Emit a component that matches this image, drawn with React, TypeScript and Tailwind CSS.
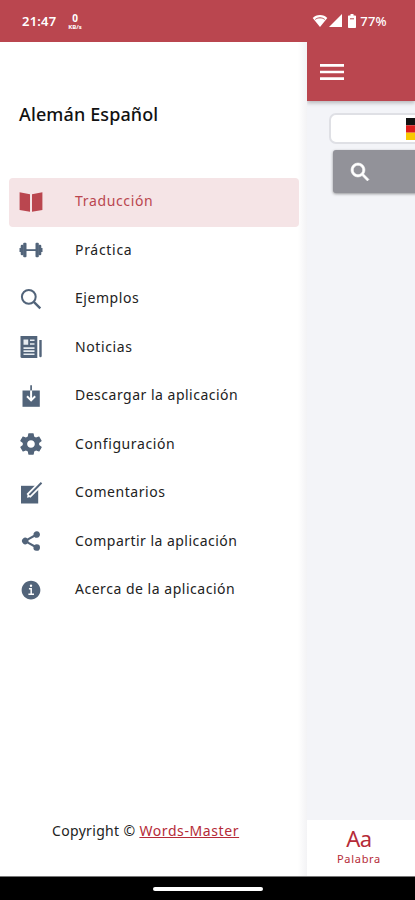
import type { SVGProps } from 'react';
import { IoMdSettings } from 'react-icons/io';
import { IoInformationCircleSharp, IoMenuSharp, IoSearchSharp, IoShareSocialSharp } from 'react-icons/io5';

function BookIcon(props: SVGProps<SVGSVGElement>) {
    return (
        <svg viewBox="0 0 24 24" fill="currentColor" {...props}>
            <path d="M.6 2.300L11 4.200v17.600L.6 20zM23.400 2.300L13 4.200v17.600L23.400 20z" />
        </svg>
    );
}

function BarbellIcon(props: SVGProps<SVGSVGElement>) {
    return (
        <svg viewBox="0 0 24 24" fill="currentColor" {...props}>
            <rect x="7" y="11.200" width="10" height="1.800" />
            <rect x="4.200" y="4.700" width="3.300" height="14.600" rx="1" />
            <rect x="16.500" y="4.700" width="3.300" height="14.600" rx="1" />
            <rect x="1.700" y="6.800" width="3" height="10.400" rx="1.200" />
            <rect x="19.300" y="6.800" width="3" height="10.400" rx="1.200" />
            <path d="M.5 10h2v4h-2zM21.500 10h2v4h-2z" />
        </svg>
    );
}

function NewsIcon(props: SVGProps<SVGSVGElement>) {
    return (
        <svg viewBox="0 0 24 24" fill="currentColor" {...props}>
            <path d="M1.500 1h16.800v22H3q-1.500 0-1.500-1.500z" />
            <path d="M20.300 5h2.400v16q0 1.300-1.200 1.300t-1.200-1.300z" />
            <path d="M4.500 4.500h4.700v5.200H4.500zM11 4.500h4.500v1.500H11zM11 8.200h4.500v1.500H11zM4.500 12.300h11v1.800h-11zM4.500 15.300h11v1.800h-11zM4.500 18.500h11V20h-11z" fill="#e6ebf0" />
        </svg>
    );
}

function DownloadIcon(props: SVGProps<SVGSVGElement>) {
    return (
        <svg viewBox="0 0 24 24" fill="none" {...props}>
            <path d="M3.500 6.500h17.300v16.300H3.500z" fill="currentColor" />
            <path d="M12.100 1.200v5.500" stroke="currentColor" strokeWidth="1.700" />
            <path d="M12.100 6.500v9.500M8 12.300l4.100 4.100 4.100-4.100" stroke="#fff" strokeWidth="2" />
        </svg>
    );
}

function CreateIcon(props: SVGProps<SVGSVGElement>) {
    return (
        <svg viewBox="0 0 24 24" fill="none" {...props}>
            <path d="M2 4.800h17.200v17.700H2z" fill="currentColor" />
            <path d="M22.500 1.800L9.500 14.900" stroke="#fff" strokeWidth="5.500" />
            <path d="M22.500 1.800l-12.200 12.300" stroke="currentColor" strokeWidth="2" />
            <path d="M8 16.800l.8-3.500 2.700 2.700z" fill="#fff" />
        </svg>
    );
}

function SearchIcon(props: SVGProps<SVGSVGElement>) {
    return (
        <svg viewBox="0 0 24 24" fill="none" stroke="currentColor" {...props}>
            <circle cx="9.800" cy="9.800" r="6.900" strokeWidth="2" />
            <path d="M14.800 14.800l6.500 6.500" strokeWidth="2.400" />
        </svg>
    );
}

const MENU_ITEMS = [
    { title: 'Traducción', icon: BookIcon, tracking: 'tracking-[0.65px]', active: true },
    { title: 'Práctica', icon: BarbellIcon, tracking: 'tracking-[0.7px]' },
    { title: 'Ejemplos', icon: SearchIcon, tracking: 'tracking-[0.55px]' },
    { title: 'Noticias', icon: NewsIcon, tracking: 'tracking-[0.6px]' },
    { title: 'Descargar la aplicación', icon: DownloadIcon, tracking: 'tracking-[0.5px]' },
    { title: 'Configuración', icon: IoMdSettings, tracking: 'tracking-[0.6px]', iconClass: 'scale-110' },
    { title: 'Comentarios', icon: CreateIcon, tracking: 'tracking-[0.55px]' },
    { title: 'Compartir la aplicación', icon: IoShareSocialSharp, tracking: 'tracking-[0.47px]' },
    { title: 'Acerca de la aplicación', icon: IoInformationCircleSharp, tracking: 'tracking-[0.52px]' },
];

function StatusBar() {
    return (
        <div className="flex h-[42px] shrink-0 items-center justify-between bg-[#ba464f] pl-[22px] pr-[28px] text-white">
            <div className="flex items-center gap-[12px]">
                <span className="text-[13px] font-semibold leading-none tracking-[0.2px]">21:47</span>
                <span className="flex flex-col items-center pt-[1px] font-bold">
                    <span className="text-[10px] leading-[10px]">0</span>
                    <span className="text-[6px] leading-[8px]">KB/s</span>
                </span>
            </div>
            <div className="flex items-center">
                <svg className="h-[14px] w-[16px]" viewBox="0 0 16 14">
                    <path d="M8 1C5 1 2.400 2.100.7 3.900L8 13l7.300-9.100C13.600 2.100 11 1 8 1z" fill="#fff" />
                    <path d="M3.300 5.400C5.800 3.300 10.200 3.300 12.700 5.400" fill="none" stroke="#ba464f" strokeWidth="1" />
                </svg>
                <svg className="ml-px h-[14px] w-[13px]" viewBox="0 0 13 14">
                    <path d="M13 0v13H0z" fill="#fff" />
                </svg>
                <svg className="ml-[6px] h-[14px] w-[8px]" viewBox="0 0 8 14">
                    <path d="M2.500 0h3v1.500h1.700q.8 0 .8.800v10.900q0 .8-.8.800H.8q-.8 0-.8-.8V2.300q0-.8.800-.8h1.700z" fill="#fff" />
                    <path d="M2 4.800h4" stroke="#ba464f" strokeWidth="1" />
                </svg>
                <span className="ml-[4px] text-[13px] font-medium leading-none tracking-[0.3px]">77%</span>
            </div>
        </div>
    );
}

function Drawer() {
    return (
        <nav className="flex w-[307px] shrink-0 flex-col bg-linear-to-r from-white from-[97%] to-[#f3f3f5]">
            <h1 className="mt-[59px] pl-[19px] text-[18px] font-medium leading-[26px] tracking-[0.12px] text-[#111]">
                Alemán Español
            </h1>
            <ul className="mt-[51px] pl-[9px] pr-[8px]">
                {MENU_ITEMS.map((item) => (
                    <li
                        key={item.title}
                        className={`flex h-[48.5px] items-center rounded-[4px] pb-px pl-[10px] ${item.active ? 'bg-[#f5e4e6] text-[#ba464f]' : 'text-[#222]'}`}
                    >
                        <item.icon className={`h-[24px] w-[24px] shrink-0 ${item.active ? 'text-[#ba464f]' : 'text-[#52647a]'} ${item.iconClass ?? ''}`} />
                        <span className={`ml-[32px] whitespace-nowrap pb-px text-[14px] leading-none ${item.tracking}`}>{item.title}</span>
                    </li>
                ))}
            </ul>
            <p className="mb-[35px] mt-auto pl-[52px] text-[14px] leading-[20px] tracking-[0.33px] text-[#222]">
                Copyright © <a className="tracking-[0.6px] text-[#b52b38] underline">Words-Master</a>
            </p>
        </nav>
    );
}

function TranslatePage() {
    return (
        <main className="flex min-w-0 flex-1 flex-col overflow-hidden bg-[#f3f4f8]">
            <header className="flex h-[59px] shrink-0 items-center bg-[#ba464f] pl-[9px] text-white shadow-[0_2px_4px_rgba(0,0,0,0.25)]">
                <IoMenuSharp className="h-[32px] w-[32px]" />
            </header>
            <div className="ml-[22px] mt-[12px] flex h-[31px] w-[240px] shrink-0 items-center rounded-[7px] border-2 border-[#dfe0e5] bg-white">
                <svg className="ml-[75px] h-[22px] w-[30px]" viewBox="0 0 30 22">
                    <path d="M0 0h30v7.300H0z" fill="#111" />
                    <path d="M0 7.300h30v7.400H0z" fill="#dd1c1c" />
                    <path d="M0 14.700h30V22H0z" fill="#f8c800" />
                </svg>
            </div>
            <div className="ml-[26px] mt-[6px] flex h-[43px] w-[240px] shrink-0 items-center rounded-[3px] bg-[#929299] pl-[16px] text-white shadow-[0_1px_3px_rgba(0,0,0,0.4)]">
                <IoSearchSharp className="h-[22px] w-[22px]" stroke="currentColor" strokeWidth={14} />
            </div>
            <footer className="mt-auto flex h-[56px] shrink-0 flex-col items-center bg-white pr-[4px] text-[#b52b38]">
                <span className="mt-[5px] text-[22px] leading-[26px] tracking-[-0.5px]">Aa</span>
                <span className="text-[11px] leading-[16px] tracking-[0.7px]">Palabra</span>
            </footer>
        </main>
    );
}

export default function App() {
    return (
        <div className="flex h-[900px] w-[415px] flex-col overflow-hidden bg-white font-['Noto_Sans',sans-serif]">
            <StatusBar />
            <div className="flex min-h-0 flex-1">
                <Drawer />
                <TranslatePage />
            </div>
            <div className="flex h-[24px] shrink-0 items-center justify-center border-t border-[#777] bg-black">
                <div className="h-[4px] w-[110px] rounded-full bg-white" />
            </div>
        </div>
    );
}
